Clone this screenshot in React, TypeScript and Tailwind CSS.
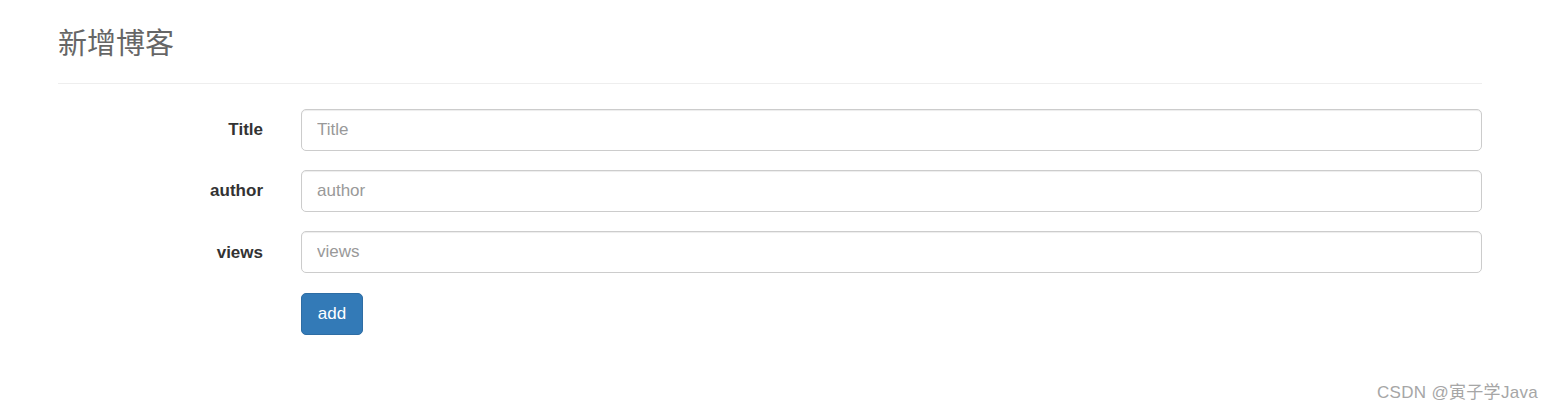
export default function App() {
  const fields = [
    { label: 'Title', placeholder: 'Title' },
    { label: 'author', placeholder: 'author' },
    { label: 'views', placeholder: 'views' },
  ];

  return (
    <div
      className="relative h-[410px] w-[1553px] bg-white text-[#333]"
      style={{ fontFamily: '"Liberation Sans", Arial, "Noto Sans CJK SC", sans-serif' }}
    >
      <div className="ml-[58px] w-[1424px] pt-[26px]">
        {/* Page header */}
        <h2 className="pb-[21px] text-[29px] leading-[36px] text-[#666] border-b border-[#eee] font-normal">
          新增博客
        </h2>

        {/* Form */}
        <form className="mt-[25px] flex flex-col gap-[19.2px]" onSubmit={(e) => e.preventDefault()}>
          {fields.map((f) => (
            <div key={f.label} className="flex items-center">
              <label className="w-[205px] text-right pr-[38px] text-[17px] font-bold text-[#333] box-content">
                {f.label}
              </label>
              <input
                type="text"
                placeholder={f.placeholder}
                className="h-[42px] flex-1 rounded-[5px] border border-[#ccc] px-[15px] text-[17px] text-[#555] placeholder:text-[#999] shadow-[inset_0_1px_1px_rgba(0,0,0,0.075)] outline-none"
              />
            </div>
          ))}
          <div className="flex">
            <div className="w-[243px]" />
            <button
              type="submit"
              className="h-[42px] w-[62px] rounded-[5px] border border-[#2e6da4] bg-[#337ab7] text-[17px] text-white"
            >
              add
            </button>
          </div>
        </form>
      </div>

      {/* Watermark */}
      <div className="absolute right-[15px] top-[380px] text-[17px] tracking-[0.3px] text-[#a6a6a6]">
        CSDN @寅子学Java
      </div>
    </div>
  );
}
